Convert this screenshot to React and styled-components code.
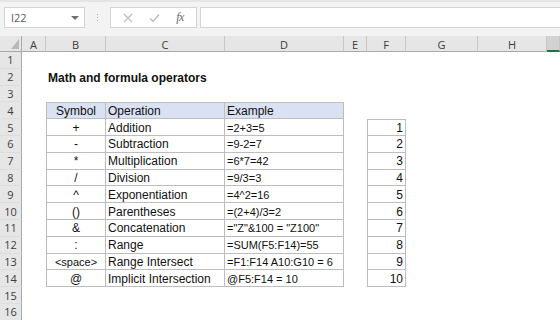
import React from "react";
import styled, { createGlobalStyle } from "styled-components";

const GlobalStyle = createGlobalStyle`
  html, body {
    margin: 0;
    padding: 0;
    background: #ffffff;
    overflow: hidden;
  }
`;

const Window = styled.div`
  width: 560px;
  height: 320px;
  overflow: hidden;
  display: flex;
  flex-direction: column;
  background: #ffffff;
  font-family: "Liberation Sans", Arial, sans-serif;
`;

const Toolbar = styled.div`
  height: 36px;
  box-sizing: border-box;
  flex-shrink: 0;
  display: flex;
  align-items: flex-start;
  padding: 7px 0 0 4px;
  background: #f3f3f3;
  border-top: 2px solid #e4e4e4;
`;

const NameBox = styled.div`
  width: 81px;
  height: 21px;
  box-sizing: border-box;
  margin-top: -2px;
  display: flex;
  align-items: center;
  justify-content: space-between;
  padding: 0 5px 0 6px;
  background: #ffffff;
  border: 1px solid #d4d4d4;
  font-family: "Open Sans", sans-serif;
  font-size: 11px;
  color: #5a5a5a;
`;

const Caret = styled.span`
  width: 0;
  height: 0;
  border-left: 4px solid transparent;
  border-right: 4px solid transparent;
  border-top: 4px solid #6f6f6f;
`;

const Grip = styled.div`
  width: 25px;
  height: 21px;
  margin-top: -2px;
  display: flex;
  flex-direction: column;
  align-items: center;
  justify-content: center;
  gap: 2px;
`;

const Dot = styled.span`
  width: 1px;
  height: 1px;
  background: #a8a8a8;
`;

const FxBox = styled.div`
  width: 87px;
  height: 21px;
  box-sizing: border-box;
  margin-top: -2px;
  margin-right: 3px;
  display: flex;
  align-items: center;
  justify-content: space-around;
  padding: 0 4px;
  background: #ffffff;
  border: 1px solid #d4d4d4;
`;

const FxLabel = styled.span`
  font-family: "Liberation Serif", serif;
  font-style: italic;
  font-size: 12px;
  color: #6a6a6a;
  letter-spacing: -0.5px;
`;

const FormulaInput = styled.div`
  flex: 1;
  height: 21px;
  box-sizing: border-box;
  margin-top: -2px;
  background: #ffffff;
  border: 1px solid #d4d4d4;
  border-right: none;
`;

const Sheet = styled.div`
  display: grid;
  grid-template-columns: 22px 24px 60px 119px 119px 23px 39px 72px 69px 1fr;
  grid-template-rows: 16px repeat(16, 16.8px);
`;

const Corner = styled.div`
  position: relative;
  background: #e6e6e6;
  border-right: 1px solid #a9a9a9;
  border-bottom: 1px solid #a9a9a9;
`;

const CornerMark = styled.span`
  position: absolute;
  right: 2px;
  bottom: 2px;
  width: 8px;
  height: 10px;
  background: #b8b8b8;
  clip-path: polygon(100% 0, 100% 100%, 0 100%);
`;

const ColHead = styled.div`
  box-sizing: border-box;
  display: flex;
  align-items: center;
  justify-content: center;
  background: ${(p) => (p.$selected ? "#d2d2d2" : "#e6e6e6")};
  border-right: 1px solid #c6c6c6;
  border-bottom: ${(p) => (p.$selected ? "2px solid #217346" : "1px solid #a9a9a9")};
  font-family: "Open Sans", sans-serif;
  font-size: 11px;
  color: #3c3c3c;
  padding-top: 1px;
`;

const RowHead = styled.div`
  box-sizing: border-box;
  display: flex;
  align-items: center;
  justify-content: center;
  background: #e6e6e6;
  border-right: 1px solid #a9a9a9;
  border-bottom: 1px solid #dcdcdc;
  font-family: "Open Sans", sans-serif;
  font-size: 11px;
  color: #3c3c3c;
`;

const Cell = styled.div`
  box-sizing: border-box;
  min-width: 0;
  display: flex;
  align-items: center;
  justify-content: ${(p) =>
    p.$align === "center" ? "center" : p.$align === "right" ? "flex-end" : "flex-start"};
  padding: 1px 2px 0 2px;
  white-space: nowrap;
  overflow: visible;
  font-size: ${(p) => p.$size || 12}px;
  font-weight: ${(p) => (p.$bold ? 700 : 400)};
  color: #111111;
  background: ${(p) => (p.$fill ? "#d9e1f2" : "transparent")};
  border-top: ${(p) => (p.$top ? "1px solid #bdbdbd" : "none")};
  border-left: ${(p) => (p.$left ? "1px solid #bdbdbd" : "none")};
  border-right: ${(p) => (p.$boxed ? "1px solid #bdbdbd" : "none")};
  border-bottom: ${(p) => (p.$boxed ? "1px solid #bdbdbd" : "none")};
`;

const columns = ["A", "B", "C", "D", "E", "F", "G", "H", "I"];

const operators = [
  ["+", "Addition", "=2+3=5"],
  ["-", "Subtraction", "=9-2=7"],
  ["*", "Multiplication", "=6*7=42"],
  ["/", "Division", "=9/3=3"],
  ["^", "Exponentiation", "=4^2=16"],
  ["()", "Parentheses", "=(2+4)/3=2"],
  ["&", "Concatenation", '="Z"&100 = "Z100"'],
  [":", "Range", "=SUM(F5:F14)=55"],
  ["<space>", "Range Intersect", "=F1:F14 A10:G10 = 6"],
  ["@", "Implicit Intersection", "@F5:F14 = 10"],
];

function XIcon() {
  return (
    <svg width="10" height="10" viewBox="0 0 10 10">
      <path d="M1 1 L9 9 M9 1 L1 9" stroke="#bdbdbd" strokeWidth="1.2" fill="none" />
    </svg>
  );
}

function CheckIcon() {
  return (
    <svg width="11" height="10" viewBox="0 0 11 10">
      <path d="M1 5.5 L4 8.5 L10 1.5" stroke="#bdbdbd" strokeWidth="1.3" fill="none" />
    </svg>
  );
}

function rowCells(r) {
  const cells = {};
  if (r === 2) {
    cells.B = <Cell $bold>Math and formula operators</Cell>;
  }
  if (r === 4) {
    cells.B = <Cell $fill $top $left $boxed $align="center">Symbol</Cell>;
    cells.C = <Cell $fill $top $boxed>Operation</Cell>;
    cells.D = <Cell $fill $top $boxed>Example</Cell>;
  }
  if (r >= 5 && r <= 14) {
    const [sym, op, ex] = operators[r - 5];
    cells.B = (
      <Cell $left $boxed $align="center" $size={sym === "<space>" ? 11 : 12}>
        {sym}
      </Cell>
    );
    cells.C = <Cell $boxed>{op}</Cell>;
    cells.D = <Cell $boxed $size={11}>{ex}</Cell>;
    cells.F = (
      <Cell $left $top={r === 5} $boxed $align="right">
        {r - 4}
      </Cell>
    );
  }
  return cells;
}

export default function App() {
  const rows = Array.from({ length: 16 }, (_, i) => i + 1);
  return (
    <Window>
      <GlobalStyle />
      <Toolbar>
        <NameBox>
          <span>I22</span>
          <Caret />
        </NameBox>
        <Grip>
          <Dot />
          <Dot />
          <Dot />
        </Grip>
        <FxBox>
          <XIcon />
          <CheckIcon />
          <FxLabel>fx</FxLabel>
        </FxBox>
        <FormulaInput />
      </Toolbar>
      <Sheet>
        <Corner>
          <CornerMark />
        </Corner>
        {columns.map((c) => (
          <ColHead key={c} $selected={c === "I"}>
            {c === "I" ? "" : c}
          </ColHead>
        ))}
        {rows.map((r) => {
          const cells = rowCells(r);
          return (
            <React.Fragment key={r}>
              <RowHead>{r}</RowHead>
              {columns.map((c) => (
                <React.Fragment key={c}>{cells[c] || <Cell />}</React.Fragment>
              ))}
            </React.Fragment>
          );
        })}
      </Sheet>
    </Window>
  );
}
